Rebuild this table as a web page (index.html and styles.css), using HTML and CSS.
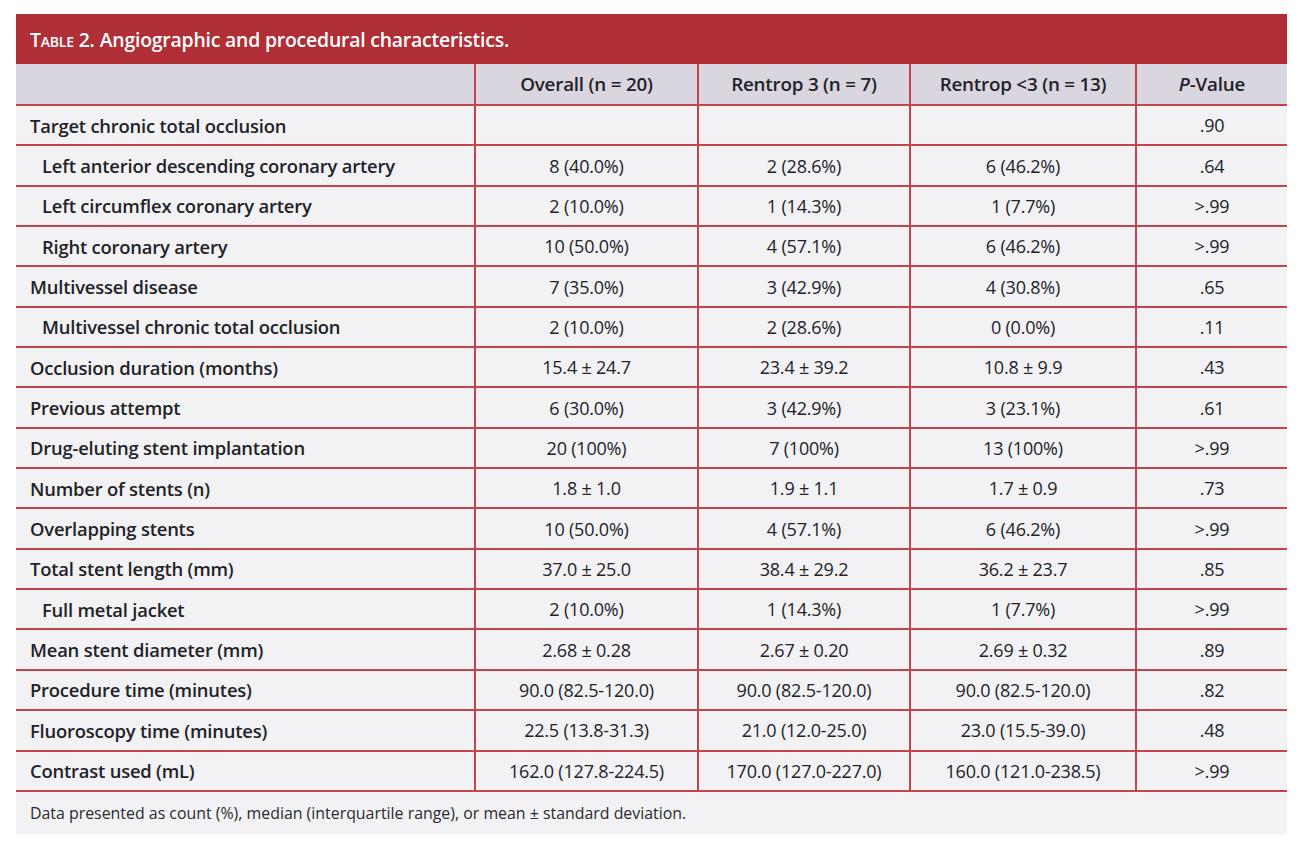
FILE: index.html
```html
<!DOCTYPE html>
<html>
<head>
<meta charset="utf-8">
<link rel="stylesheet" href="styles.css">
</head>
<body>
<div class="panel">
  <div class="caption"><span class="sc">Table 2.</span> Angiographic and procedural characteristics.</div>
  <table class="data">
    <colgroup>
      <col class="c-label"><col class="c-overall"><col class="c-r3"><col class="c-rlt3"><col class="c-p">
    </colgroup>
    <thead>
      <tr>
        <th></th>
        <th>Overall (n = 20)</th>
        <th>Rentrop 3 (n = 7)</th>
        <th>Rentrop &lt;3 (n = 13)</th>
        <th><i>P</i>-Value</th>
      </tr>
    </thead>
    <tbody>
      <tr><td class="lbl">Target chronic total occlusion</td><td></td><td></td><td></td><td>.90</td></tr>
      <tr><td class="lbl sub">Left anterior descending coronary artery</td><td>8 (40.0%)</td><td>2 (28.6%)</td><td>6 (46.2%)</td><td>.64</td></tr>
      <tr><td class="lbl sub">Left circumflex coronary artery</td><td>2 (10.0%)</td><td>1 (14.3%)</td><td>1 (7.7%)</td><td>&gt;.99</td></tr>
      <tr><td class="lbl sub">Right coronary artery</td><td>10 (50.0%)</td><td>4 (57.1%)</td><td>6 (46.2%)</td><td>&gt;.99</td></tr>
      <tr><td class="lbl">Multivessel disease</td><td>7 (35.0%)</td><td>3 (42.9%)</td><td>4 (30.8%)</td><td>.65</td></tr>
      <tr><td class="lbl sub">Multivessel chronic total occlusion</td><td>2 (10.0%)</td><td>2 (28.6%)</td><td>0 (0.0%)</td><td>.11</td></tr>
      <tr><td class="lbl">Occlusion duration (months)</td><td>15.4 ± 24.7</td><td>23.4 ± 39.2</td><td>10.8 ± 9.9</td><td>.43</td></tr>
      <tr><td class="lbl">Previous attempt</td><td>6 (30.0%)</td><td>3 (42.9%)</td><td>3 (23.1%)</td><td>.61</td></tr>
      <tr><td class="lbl">Drug-eluting stent implantation</td><td>20 (100%)</td><td>7 (100%)</td><td>13 (100%)</td><td>&gt;.99</td></tr>
      <tr><td class="lbl">Number of stents (n)</td><td>1.8 ± 1.0</td><td>1.9 ± 1.1</td><td>1.7 ± 0.9</td><td>.73</td></tr>
      <tr><td class="lbl">Overlapping stents</td><td>10 (50.0%)</td><td>4 (57.1%)</td><td>6 (46.2%)</td><td>&gt;.99</td></tr>
      <tr><td class="lbl">Total stent length (mm)</td><td>37.0 ± 25.0</td><td>38.4 ± 29.2</td><td>36.2 ± 23.7</td><td>.85</td></tr>
      <tr><td class="lbl sub">Full metal jacket</td><td>2 (10.0%)</td><td>1 (14.3%)</td><td>1 (7.7%)</td><td>&gt;.99</td></tr>
      <tr><td class="lbl">Mean stent diameter (mm)</td><td>2.68 ± 0.28</td><td>2.67 ± 0.20</td><td>2.69 ± 0.32</td><td>.89</td></tr>
      <tr><td class="lbl">Procedure time (minutes)</td><td>90.0 (82.5-120.0)</td><td>90.0 (82.5-120.0)</td><td>90.0 (82.5-120.0)</td><td>.82</td></tr>
      <tr><td class="lbl">Fluoroscopy time (minutes)</td><td>22.5 (13.8-31.3)</td><td>21.0 (12.0-25.0)</td><td>23.0 (15.5-39.0)</td><td>.48</td></tr>
      <tr><td class="lbl">Contrast used (mL)</td><td>162.0 (127.8-224.5)</td><td>170.0 (127.0-227.0)</td><td>160.0 (121.0-238.5)</td><td>&gt;.99</td></tr>
    </tbody>
  </table>
  <div class="note">Data presented as count (%), median (interquartile range), or mean ± standard deviation.</div>
</div>
</body>
</html>
```
FILE: styles.css
```css
html, body {
  margin: 0;
  padding: 0;
  background: #ffffff;
}
body {
  font-family: "Open Sans", "Noto Sans", sans-serif;
  color: #222228;
}
.panel {
  margin: 14px 0 0 16px;
  width: 1271px;
  background: #f2f2f4;
}
.caption {
  background: #b02f37;
  color: #ffffff;
  height: 50px;
  box-sizing: border-box;
  padding: 0 0 0 14px;
  display: flex;
  align-items: center;
  font-size: 19.4px;
  font-weight: 600;
  letter-spacing: -0.2px;
}
.sc {
  font-variant: small-caps;
  margin-right: 5px;
}
.data {
  width: 100%;
  border-collapse: collapse;
  table-layout: fixed;
}
.c-label { width: 459px; }
.c-overall { width: 223px; }
.c-r3 { width: 212px; }
.c-rlt3 { width: 226px; }
.c-p { width: 151px; }
.data th {
  background: #d9d6df;
  height: 40px;
  font-size: 18.8px;
  font-weight: 600;
  text-align: center;
  padding: 0;
  border-left: 2px solid #c2454b;
  border-bottom: 2px solid #c2454b;
  letter-spacing: -0.2px;
}
.data th:first-child { border-left: none; }
.data td {
  height: 38.35px;
  padding: 0;
  text-align: center;
  font-size: 18px;
  font-weight: 500;
  border-left: 2px solid #c2454b;
  border-bottom: 2px solid #c2454b;
  letter-spacing: -0.2px;
}
.data td.lbl {
  text-align: left;
  padding-left: 14px;
  font-weight: 600;
  font-size: 18.4px;
  border-left: none;
}
.data td.sub {
  padding-left: 26px;
}
.note {
  height: 42px;
  display: flex;
  align-items: center;
  padding-left: 14px;
  font-size: 15.9px;
  color: #2a2a30;
}
```
